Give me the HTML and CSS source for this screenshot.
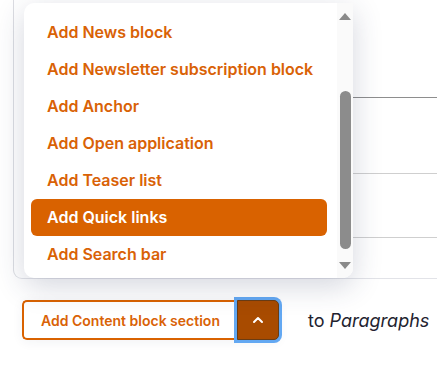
FILE: index.html
```html
<!DOCTYPE html>
<html lang="en">
<head>
  <meta charset="UTF-8">
  <title>Add paragraph</title>
  <link rel="stylesheet" href="styles.css">
</head>
<body>
  <div class="stage">
    <div class="panel">
      <div class="panel-row row-a"></div>
      <div class="panel-row row-b"></div>
      <div class="panel-row row-c"></div>
    </div>

    <div class="dropdown">
      <ul class="menu">
        <li class="menu-item">Add News block</li>
        <li class="menu-item">Add Newsletter subscription block</li>
        <li class="menu-item">Add Anchor</li>
        <li class="menu-item">Add Open application</li>
        <li class="menu-item">Add Teaser list</li>
        <li class="menu-item active">Add Quick links</li>
        <li class="menu-item">Add Search bar</li>
      </ul>
      <div class="scrollbar">
        <span class="arrow up"></span>
        <span class="thumb"></span>
        <span class="arrow down"></span>
      </div>
    </div>

    <div class="actions">
      <div class="split">
        <button class="btn-main">Add Content block section</button>
        <button class="btn-toggle">
          <svg width="12" height="8" viewBox="0 0 12 8"><path d="M2 6 L6 2 L10 6" fill="none" stroke="#fff" stroke-width="2" stroke-linecap="round" stroke-linejoin="round"/></svg>
        </button>
      </div>
      <span class="target">to <em>Paragraphs</em></span>
    </div>
  </div>
</body>
</html>
```

FILE: styles.css
```css
body {
  margin: 0;
  background: #fff;
  font-family: Inter, "Noto Sans", sans-serif;
}
.stage {
  position: relative;
  width: 437px;
  height: 365px;
  overflow: hidden;
}
.panel {
  margin-left: 13px;
  height: 278px;
  border-left: 1px solid #dcdde2;
  border-bottom: 1px solid #e2e3e8;
  border-bottom-left-radius: 9px;
  background: #fff;
  position: relative;
}
.panel-row {
  height: 0;
  margin-left: 60px;
}
.row-a {
  padding-top: 97px;
  border-bottom: 1px solid #8e8e8e;
}
.row-b {
  padding-top: 75px;
  border-bottom: 1px solid #cfcfcf;
}
.row-c {
  padding-top: 63px;
  border-bottom: 1px solid #cfcfcf;
}
.dropdown {
  position: absolute;
  left: 24px;
  top: 3px;
  width: 329px;
  height: 275px;
  background: #fff;
  border-radius: 10px 0 10px 10px;
  box-shadow: 0 8px 30px rgba(40, 50, 90, 0.2);
  display: flex;
  overflow: hidden;
}
.menu {
  flex: 1;
  list-style: none;
  margin: 0;
  padding: 11px 10px 0 7px;
}
.menu-item {
  height: 37px;
  line-height: 37px;
  padding-left: 16px;
  border-radius: 6px;
  font-size: 16px;
  font-weight: 600;
  color: #d96206;
  white-space: nowrap;
}
.menu-item.active {
  background: #d96200;
  color: #fff;
}
.scrollbar {
  width: 16px;
  background: #fafafa;
  display: flex;
  flex-direction: column;
  align-items: center;
  padding: 10px 0 6px;
}
.arrow {
  width: 0;
  height: 0;
  border-left: 6px solid transparent;
  border-right: 6px solid transparent;
}
.arrow.up {
  border-bottom: 7px solid #8a8a8a;
}
.arrow.down {
  border-top: 7px solid #8a8a8a;
}
.thumb {
  width: 11px;
  height: 158px;
  margin: 71px 0 13px;
  background: #8c8c8c;
  border-radius: 6px;
}
.actions {
  display: flex;
  align-items: center;
  padding: 21px 0 0 22px;
}
.split {
  display: flex;
  height: 40px;
  background: #fff;
  border-radius: 5px;
  box-shadow: 0 2px 12px rgba(40, 50, 90, 0.06);
}
.btn-main {
  width: 215px;
  border: 2px solid #d96200;
  border-right: none;
  border-radius: 5px 0 0 5px;
  background: #fff;
  color: #d96206;
  font-family: inherit;
  font-size: 14px;
  font-weight: 600;
  padding: 0;
}
.btn-toggle {
  width: 42px;
  border: 1px solid #6a3c14;
  border-radius: 0 5px 5px 0;
  background: #a84b00;
  box-shadow: 0 0 0 3px #63a8f2;
  display: flex;
  align-items: center;
  justify-content: center;
  padding: 0;
}
.target {
  margin-left: 29px;
  font-size: 18px;
  color: #23232f;
}
```
